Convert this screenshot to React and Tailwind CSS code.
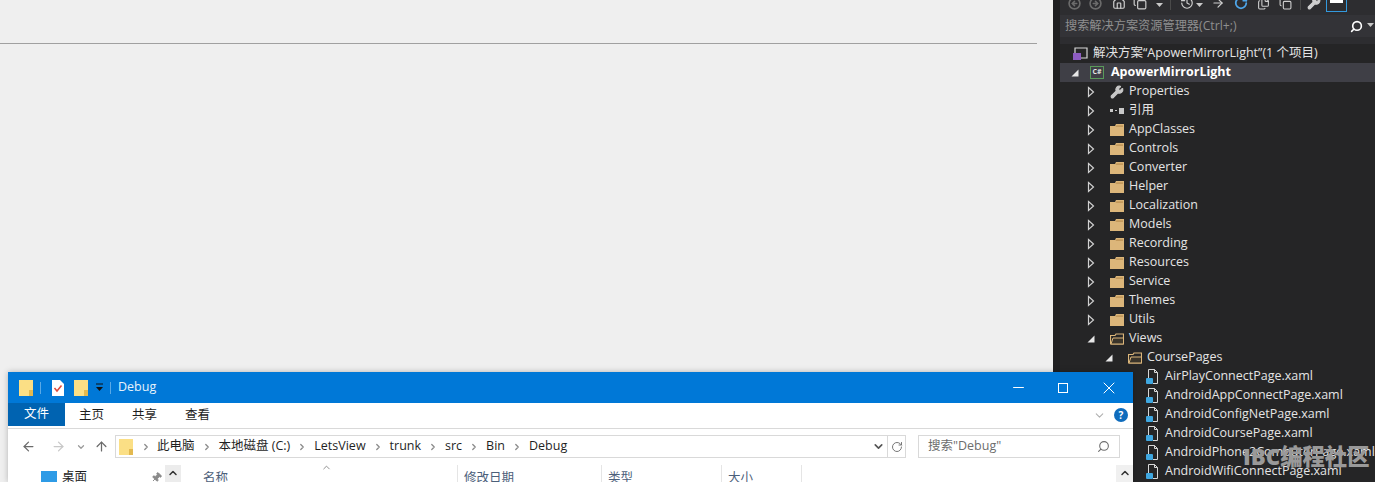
import React from "react";
import { Minus, X, ArrowLeft, ArrowRight, ArrowUp, ChevronDown, ChevronUp, ChevronRight, RotateCw, Search, Pin, Wrench, Home, History, Copy, Files, CircleArrowLeft, CircleArrowRight } from "lucide-react";

const font = "font-['Open_Sans','Noto_Sans_CJK_SC',sans-serif]";

// ================= TREE DATA =================

const folders = [
  "AppClasses",
  "Controls",
  "Converter",
  "Helper",
  "Localization",
  "Models",
  "Recording",
  "Resources",
  "Service",
  "Themes",
  "Utils",
];

const files = [
  "AirPlayConnectPage.xaml",
  "AndroidAppConnectPage.xaml",
  "AndroidConfigNetPage.xaml",
  "AndroidCoursePage.xaml",
  "AndroidPhone2ComputerPage.xaml",
  "AndroidWifiConnectPage.xaml",
];

// ================= SMALL ICONS =================

const Closed = () => (
  <svg width="8" height="12" viewBox="0 0 8 12" className="shrink-0">
    <path d="M1.5 1.5 L6.5 6 L1.5 10.5 Z" fill="none" stroke="#d0d0d0" strokeWidth="1.2" />
  </svg>
);

const Open = () => (
  <svg width="8" height="8" viewBox="0 0 8 8" className="shrink-0">
    <path d="M7.5 0.5 V7.5 H0.5 Z" fill="#e8e8e8" />
  </svg>
);

const Folder = () => (
  <svg width="14" height="12" viewBox="0 0 14 12" className="shrink-0">
    <path d="M0 2 H5 L6 0 H14 V12 H0 Z" fill="#dcb67a" />
    <path d="M1 3 H5.5 L6.5 1.2 H13 V3 Z" fill="#c49a5c" />
  </svg>
);

const FolderOpen = () => (
  <svg width="14" height="12" viewBox="0 0 14 12" className="shrink-0">
    <path d="M0.5 11 V2.5 H5 L6 1 H13.5 V11 Z" fill="none" stroke="#dcb67a" strokeWidth="1.2" />
    <path d="M1 11 L3 5 H13.5 V11 Z" fill="#3a342a" stroke="#dcb67a" />
  </svg>
);

const XamlFile = () => (
  <svg width="14" height="16" viewBox="0 0 14 16" className="shrink-0">
    <path d="M3.5 9 V0.5 H9.5 L12.5 3.5 V14.5 H8" fill="none" stroke="#d8d8d8" />
    <path d="M9.5 0.5 V3.5 H12.5" fill="none" stroke="#d8d8d8" />
    <rect x="1" y="9" width="7" height="6" rx="1" fill="#3fa7e0" />
  </svg>
);

const WinFolder = ({ className = "" }) => (
  <svg width="14" height="16" viewBox="0 0 14 16" className={`shrink-0 ${className}`}>
    <rect width="14" height="16" fill="#fbdf85" />
    <rect x="10" y="10" width="4" height="6" fill="#e3b94f" />
  </svg>
);

const Tri = ({ className = "" }) => (
  <svg width="7" height="4" viewBox="0 0 7 4" className={`mb-[3px] shrink-0 ${className}`}>
    <path d="M0 0 H7 L3.5 4 Z" fill="#c8c8c8" />
  </svg>
);

// ================= SOLUTION EXPLORER =================

const Row = ({ indent, arrow, icon, active, bold, textGap = "ml-[5px]", children }) => (
  <div className={`flex h-[19px] items-center ${active ? "bg-[#3f3f46]" : ""}`}>
    <div className={`flex justify-end ${indent}`}>{arrow}</div>
    {icon}
    <span className={`whitespace-nowrap ${textGap} ${bold ? "font-bold text-white" : "text-[#e4e4e4]"}`}>
      {children}
    </span>
  </div>
);

const SolutionExplorer = () => (
  <div className={`flex h-full w-[322px] bg-[#2d2d30] text-[12.5px] ${font}`}>
    <div className="w-[7px] shrink-0 bg-[#1f1f21]" />
    <div className="flex min-w-0 flex-1 flex-col">
      {/* Toolbar */}
      <div className="flex h-[15px] items-end overflow-hidden pb-[5px] pl-[8px] text-[#d0d0d0]">
        <CircleArrowLeft size={13} strokeWidth={3} className="shrink-0 text-[#6b6b6b]" />
        <CircleArrowRight size={13} strokeWidth={3} className="ml-[8px] shrink-0 text-[#6b6b6b]" />
        <Home size={14} className="ml-[10px] shrink-0" />
        <Copy size={14} className="ml-[7px] shrink-0" />
        <Tri className="ml-[9px]" />
        <div className="ml-[7px] h-[12px] w-px shrink-0 bg-[#4a4a4a]" />
        <History size={14} className="ml-[9px] shrink-0" />
        <Tri className="ml-[2px]" />
        <ArrowRight size={14} className="ml-[8px] shrink-0" />
        <RotateCw size={14} strokeWidth={3} className="ml-[9px] shrink-0 text-[#4ea6ea]" />
        <Files size={13} className="ml-[9px] shrink-0" />
        <Copy size={13} className="ml-[9px] shrink-0" />
        <div className="ml-[8px] h-[12px] w-px shrink-0 bg-[#4a4a4a]" />
        <Wrench size={14} fill="#d0d0d0" className="ml-[6px] shrink-0" />
        <div className="-mb-[2px] ml-[5px] flex h-[13px] w-[21px] shrink-0 justify-center border border-[#3399dd]">
          <div className="h-[3px] w-[13px] bg-white" />
        </div>
      </div>

      {/* Search */}
      <div className="flex h-[22px] items-center justify-between bg-[#333337] pl-[5px] pr-[1px] pt-[1px] text-[12.2px] text-[#8f8f8f]">
        <span>搜索解决方案资源管理器(Ctrl+;)</span>
        <div className="flex items-center gap-[4px]">
          <Search size={13} strokeWidth={3} className="-scale-x-100 text-white" />
          <Tri className="mb-0" />
        </div>
      </div>

      {/* Tree */}
      <div className="mt-[7px] flex-1 overflow-hidden bg-[#252526]">
        <Row
          indent="w-[12px]"
          icon={
            <svg width="16" height="14" viewBox="0 0 16 14" className="shrink-0">
              <path d="M3 6 V1 H15 V11 H9" fill="none" stroke="#d8d8d8" strokeWidth="1.2" />
              <rect x="1" y="6" width="8" height="7" fill="#8c5bc0" />
            </svg>
          }
        >
          解决方案“ApowerMirrorLight”(1 个项目)
        </Row>
        <Row
          active
          bold
          textGap="ml-[7px]"
          indent="w-[21px] pr-[2px]"
          arrow={<Open />}
          icon={
            <div className="ml-[9px] flex h-[13px] w-[14px] shrink-0 items-center justify-center border border-[#5a9a5a] text-[7px] font-bold text-[#e4e4e4]">
              C#
            </div>
          }
        >
          ApowerMirrorLight
        </Row>
        <Row
          indent="w-[36px] pr-[1px]"
          arrow={<Closed />}
          icon={<Wrench size={14} fill="#c8c8c8" className="ml-[14px] shrink-0 text-[#c8c8c8]" />}
        >
          Properties
        </Row>
        <Row
          indent="w-[36px] pr-[1px]"
          arrow={<Closed />}
          icon={
            <div className="ml-[14px] flex w-[14px] shrink-0 items-center gap-[2px]">
              <div className="h-[3px] w-[3px] bg-[#c8c8c8]" />
              <div className="h-[1px] w-[2px] bg-[#c8c8c8]" />
              <div className="h-[6px] w-[6px] bg-[#c8c8c8]" />
            </div>
          }
        >
          引用
        </Row>
        {folders.map((name) => (
          <Row
            key={name}
            indent="w-[36px] pr-[1px]"
            arrow={<Closed />}
            icon={
              <div className="ml-[14px] shrink-0">
                <Folder />
              </div>
            }
          >
            {name}
          </Row>
        ))}
        <Row
          indent="w-[36px] pr-[1px]"
          arrow={<Open />}
          icon={
            <div className="ml-[14px] shrink-0">
              <FolderOpen />
            </div>
          }
        >
          Views
        </Row>
        <Row
          indent="w-[54px] pr-[1px]"
          arrow={<Open />}
          icon={
            <div className="ml-[14px] shrink-0">
              <FolderOpen />
            </div>
          }
        >
          CoursePages
        </Row>
        {files.map((name) => (
          <Row key={name} indent="w-[85px]" textGap="ml-[6px]" icon={<XamlFile />}>
            {name}
          </Row>
        ))}
      </div>
    </div>
  </div>
);

// ================= EXPLORER WINDOW =================

const Crumb = ({ children }) => (
  <>
    <ChevronRight size={10} strokeWidth={3} className="mx-[7px] shrink-0 text-[#8a8a8a]" />
    <span>{children}</span>
  </>
);

const ExplorerWindow = () => (
  <div className={`absolute left-[8px] top-[372px] h-[110px] w-[1125px] overflow-hidden bg-white text-[12.5px] text-[#1f1f1f] shadow-[0_0_6px_rgba(0,0,0,0.25)] ${font}`}>
    {/* Title bar */}
    <div className="flex h-[31px] items-center bg-[#0078d7] pl-[11px] text-white">
      <WinFolder />
      <div className="ml-[7px] h-[12px] w-px bg-[#5aa9e6]" />
      <svg width="12" height="16" viewBox="0 0 12 16" className="ml-[11px] shrink-0">
        <path d="M0 0 H8 L12 4 V16 H0 Z" fill="#fff" />
        <path d="M2.5 8 L5 11 L9.5 5.5" fill="none" stroke="#e0483a" strokeWidth="1.5" />
      </svg>
      <WinFolder className="ml-[10px]" />
      <svg width="9" height="9" viewBox="0 0 9 9" className="ml-[7px] shrink-0">
        <path d="M1 1 H8" stroke="#111" />
        <path d="M1 4 H8 L4.5 8 Z" fill="#111" />
      </svg>
      <div className="ml-[6px] h-[12px] w-px bg-[#5aa9e6]" />
      <span className="ml-[7px] text-[#e6f2fb]">Debug</span>
      <div className="ml-auto flex items-center">
        <Minus size={17} strokeWidth={1.4} />
        <div className="ml-[31px] h-[10px] w-[10px] border border-white" />
        <X size={20} strokeWidth={1.2} className="ml-[31px] mr-[14px]" />
      </div>
    </div>

    {/* Ribbon tabs */}
    <div className="flex h-[26px] items-start border-b border-[#d9d9d9]">
      <div className="flex h-[23px] w-[57px] items-center justify-center bg-[#0063b1] text-white">文件</div>
      <span className="ml-[14px] leading-[23px]">主页</span>
      <span className="ml-[28px] leading-[23px]">共享</span>
      <span className="ml-[28px] leading-[23px]">查看</span>
      <ChevronDown size={13} className="ml-auto mr-[8px] mt-[6px] text-[#b0b0b0]" />
      <div className="mr-[5px] mt-[5px] flex h-[14px] w-[14px] items-center justify-center rounded-full bg-[#0f6cbd] text-[10px] font-bold text-white">
        ?
      </div>
    </div>

    {/* Address bar */}
    <div className="flex h-[35px] items-center pl-[13px]">
      <ArrowLeft size={15} className="text-[#6b6b6b]" />
      <ArrowRight size={15} className="ml-[15px] text-[#c8c8c8]" />
      <ChevronDown size={10} strokeWidth={3} className="ml-[10px] text-[#9a9a9a]" />
      <ArrowUp size={15} className="ml-[8px] text-[#6b6b6b]" />
      <div className="ml-[6px] flex h-[23px] w-[791px] items-center border border-[#d9d9d9]">
        <WinFolder className="ml-[3px]" />
        <ChevronRight size={10} strokeWidth={3} className="ml-[8px] mr-[6px] shrink-0 text-[#8a8a8a]" />
        <span>此电脑</span>
        <Crumb>本地磁盘 (C:)</Crumb>
        <Crumb>LetsView</Crumb>
        <Crumb>trunk</Crumb>
        <Crumb>src</Crumb>
        <Crumb>Bin</Crumb>
        <Crumb>Debug</Crumb>
        <ChevronDown size={13} strokeWidth={3} className="ml-auto mr-[2px] text-[#555]" />
        <div className="flex h-full w-[18px] items-center justify-center border-l border-[#d9d9d9]">
          <RotateCw size={12} className="text-[#777]" />
        </div>
      </div>
      <div className="ml-[12px] flex h-[23px] w-[202px] items-center justify-between border border-[#d9d9d9] px-[9px] text-[#6d6d6d]">
        <span>搜索"Debug"</span>
        <Search size={13} className="-scale-x-100" />
      </div>
    </div>

    {/* Nav pane + column headers */}
    <div className="flex h-[18px] overflow-hidden pt-[1px]">
      <div className="ml-[33px] flex items-start">
        <div className="mt-[6px] h-[14px] w-[16px] bg-[#2e9be6]" />
        <span className="ml-[5px] mt-[3px]">桌面</span>
        <Pin size={11} fill="#8a8a8a" className="ml-[64px] mt-[7px] rotate-45 text-[#8a8a8a]" />
        <div className="ml-[3px] flex h-[19px] w-[16px] justify-center bg-[#ececec] pt-[2px]">
          <ChevronUp size={12} strokeWidth={3} className="text-[#333]" />
        </div>
      </div>
      <div className="relative ml-[22px] flex flex-1 text-[#4c607a]">
        <span className="w-[254px] pt-[4px]">名称</span>
        <span className="w-[144px] border-l border-[#e5e5e5] pl-[6px] pt-[4px]">修改日期</span>
        <span className="w-[120px] border-l border-[#e5e5e5] pl-[6px] pt-[4px]">类型</span>
        <span className="w-[80px] border-l border-[#e5e5e5] pl-[6px] pt-[4px]">大小</span>
        <span className="h-[19px] border-l border-[#e5e5e5]" />
        <ChevronUp size={11} className="absolute left-[118px] -top-[3px] text-[#888]" />
        <div className="ml-auto flex h-[19px] w-[17px] justify-center bg-[#f0f0f0] pt-[2px]">
          <ChevronUp size={12} strokeWidth={3} className="text-[#333]" />
        </div>
      </div>
    </div>
  </div>
);

// ================= PAGE =================

export default function App() {
  return (
    <div className="relative flex h-[482px] w-[1375px] overflow-hidden bg-[#efefef]">
      <div className="w-[1053px] shrink-0 pt-[43px] pr-[16px]">
        <div className="h-px bg-[#a0a0a0]" />
      </div>
      <SolutionExplorer />
      <ExplorerWindow />
      {/* watermark */}
      <div className={`absolute left-[1243px] top-[444px] whitespace-nowrap text-[22.3px] font-black leading-[26px] text-[#999999] ${font}`}>
        IBC编程社区
      </div>
    </div>
  );
}
